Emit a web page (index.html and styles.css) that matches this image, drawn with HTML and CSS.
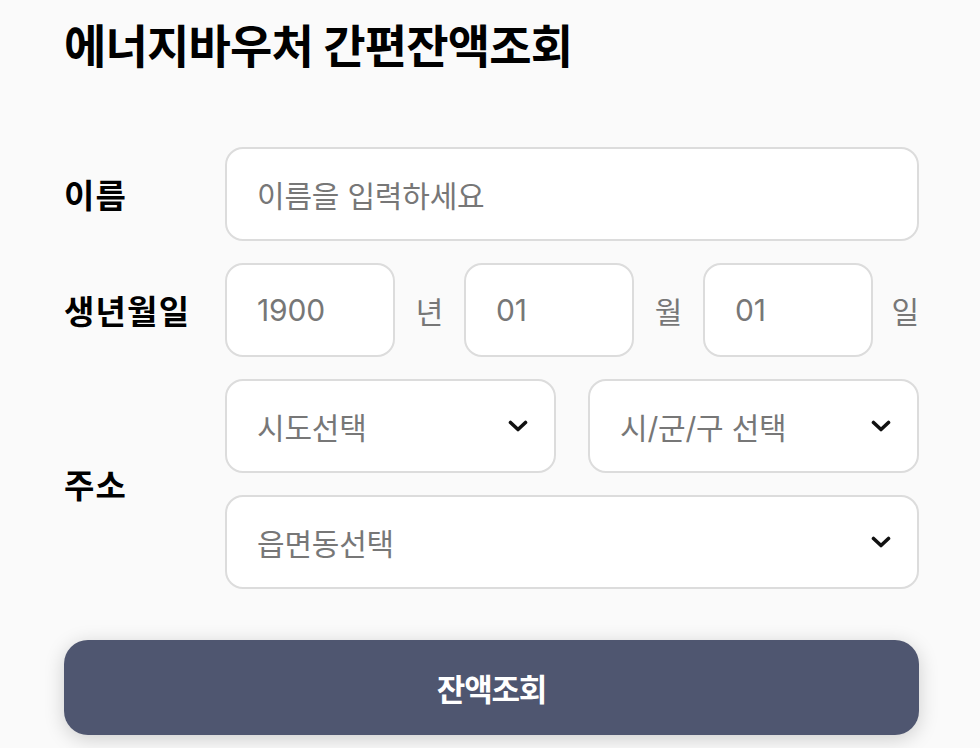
FILE: index.html
```html
<!DOCTYPE html>
<html lang="ko">
<head>
<meta charset="utf-8">
<link rel="stylesheet" href="styles.css">
</head>
<body>
<div class="page">
  <h1 class="title">에너지바우처 간편잔액조회</h1>
  <form class="form">
    <div class="row">
      <div class="label">이름</div>
      <div class="field"><div class="box full">이름을 입력하세요</div></div>
    </div>
    <div class="row">
      <div class="label">생년월일</div>
      <div class="field birth">
        <div class="box small">1900</div><span class="unit">년</span>
        <div class="box small">01</div><span class="unit">월</span>
        <div class="box small">01</div><span class="unit last">일</span>
      </div>
    </div>
    <div class="row">
      <div class="label">주소</div>
      <div class="field addr">
        <div class="selrow">
          <div class="box sel"><span>시도선택</span><svg class="chev" width="20" height="12" viewBox="0 0 20 12"><path d="M2.5 2.5 L10 9.5 L17.5 2.5" fill="none" stroke="#111" stroke-width="3.6" stroke-linecap="round" stroke-linejoin="round"/></svg></div>
          <div class="box sel"><span>시/군/구 선택</span><svg class="chev" width="20" height="12" viewBox="0 0 20 12"><path d="M2.5 2.5 L10 9.5 L17.5 2.5" fill="none" stroke="#111" stroke-width="3.6" stroke-linecap="round" stroke-linejoin="round"/></svg></div>
        </div>
        <div class="box sel"><span>읍면동선택</span><svg class="chev" width="20" height="12" viewBox="0 0 20 12"><path d="M2.5 2.5 L10 9.5 L17.5 2.5" fill="none" stroke="#111" stroke-width="3.6" stroke-linecap="round" stroke-linejoin="round"/></svg></div>
      </div>
    </div>
  </form>
  <div class="btn">잔액조회</div>
</div>
</body>
</html>
```

FILE: styles.css
```css
* { box-sizing: border-box; }
html, body { margin: 0; padding: 0; }
body {
  background: #fafafa;
  font-family: Inter, "Noto Sans CJK KR", sans-serif;
  color: #000;
  width: 980px;
  height: 748px;
  overflow: hidden;
}
.page {
  padding: 16px 61px 0 64px;
}
.title {
  margin: 0;
  font-size: 46px;
  font-weight: 700;
  letter-spacing: -0.8px;
  line-height: 60px;
  height: 60px;
}
.form {
  margin-top: 71px;
  display: flex;
  flex-direction: column;
  gap: 22px;
}
.row {
  display: flex;
  align-items: center;
}
.label {
  width: 161px;
  flex: none;
  font-size: 33px;
  font-weight: 700;
  letter-spacing: 1.2px;
}
.field { flex: 1; }
.box {
  height: 94px;
  background: #fff;
  border: 2px solid #dcdcdc;
  border-radius: 18px;
  padding: 0 30px;
  display: flex;
  align-items: center;
  font-size: 30px;
  color: #777;
  letter-spacing: -0.2px;
}
.birth {
  display: flex;
  align-items: center;
}
.box.small {
  width: 170px;
  flex: none;
}
.unit {
  width: 69px;
  flex: none;
  text-align: center;
  font-size: 30px;
  color: #777;
}
.unit.last { flex: 1; width: auto; text-align: right; }
.addr {
  display: flex;
  flex-direction: column;
  gap: 22px;
}
.selrow {
  display: flex;
  gap: 32px;
}
.selrow .sel { flex: 1; }
.sel {
  justify-content: space-between;
  padding-right: 26px;
}
.chev { flex: none; }
.btn {
  margin-top: 51px;
  height: 95px;
  background: #4f5670;
  border-radius: 24px;
  color: #fff;
  font-size: 31px;
  font-weight: 700;
  letter-spacing: -1.2px;
  display: flex;
  align-items: center;
  justify-content: center;
  box-shadow: 0 4px 20px rgba(0,0,0,0.18);
}
```
